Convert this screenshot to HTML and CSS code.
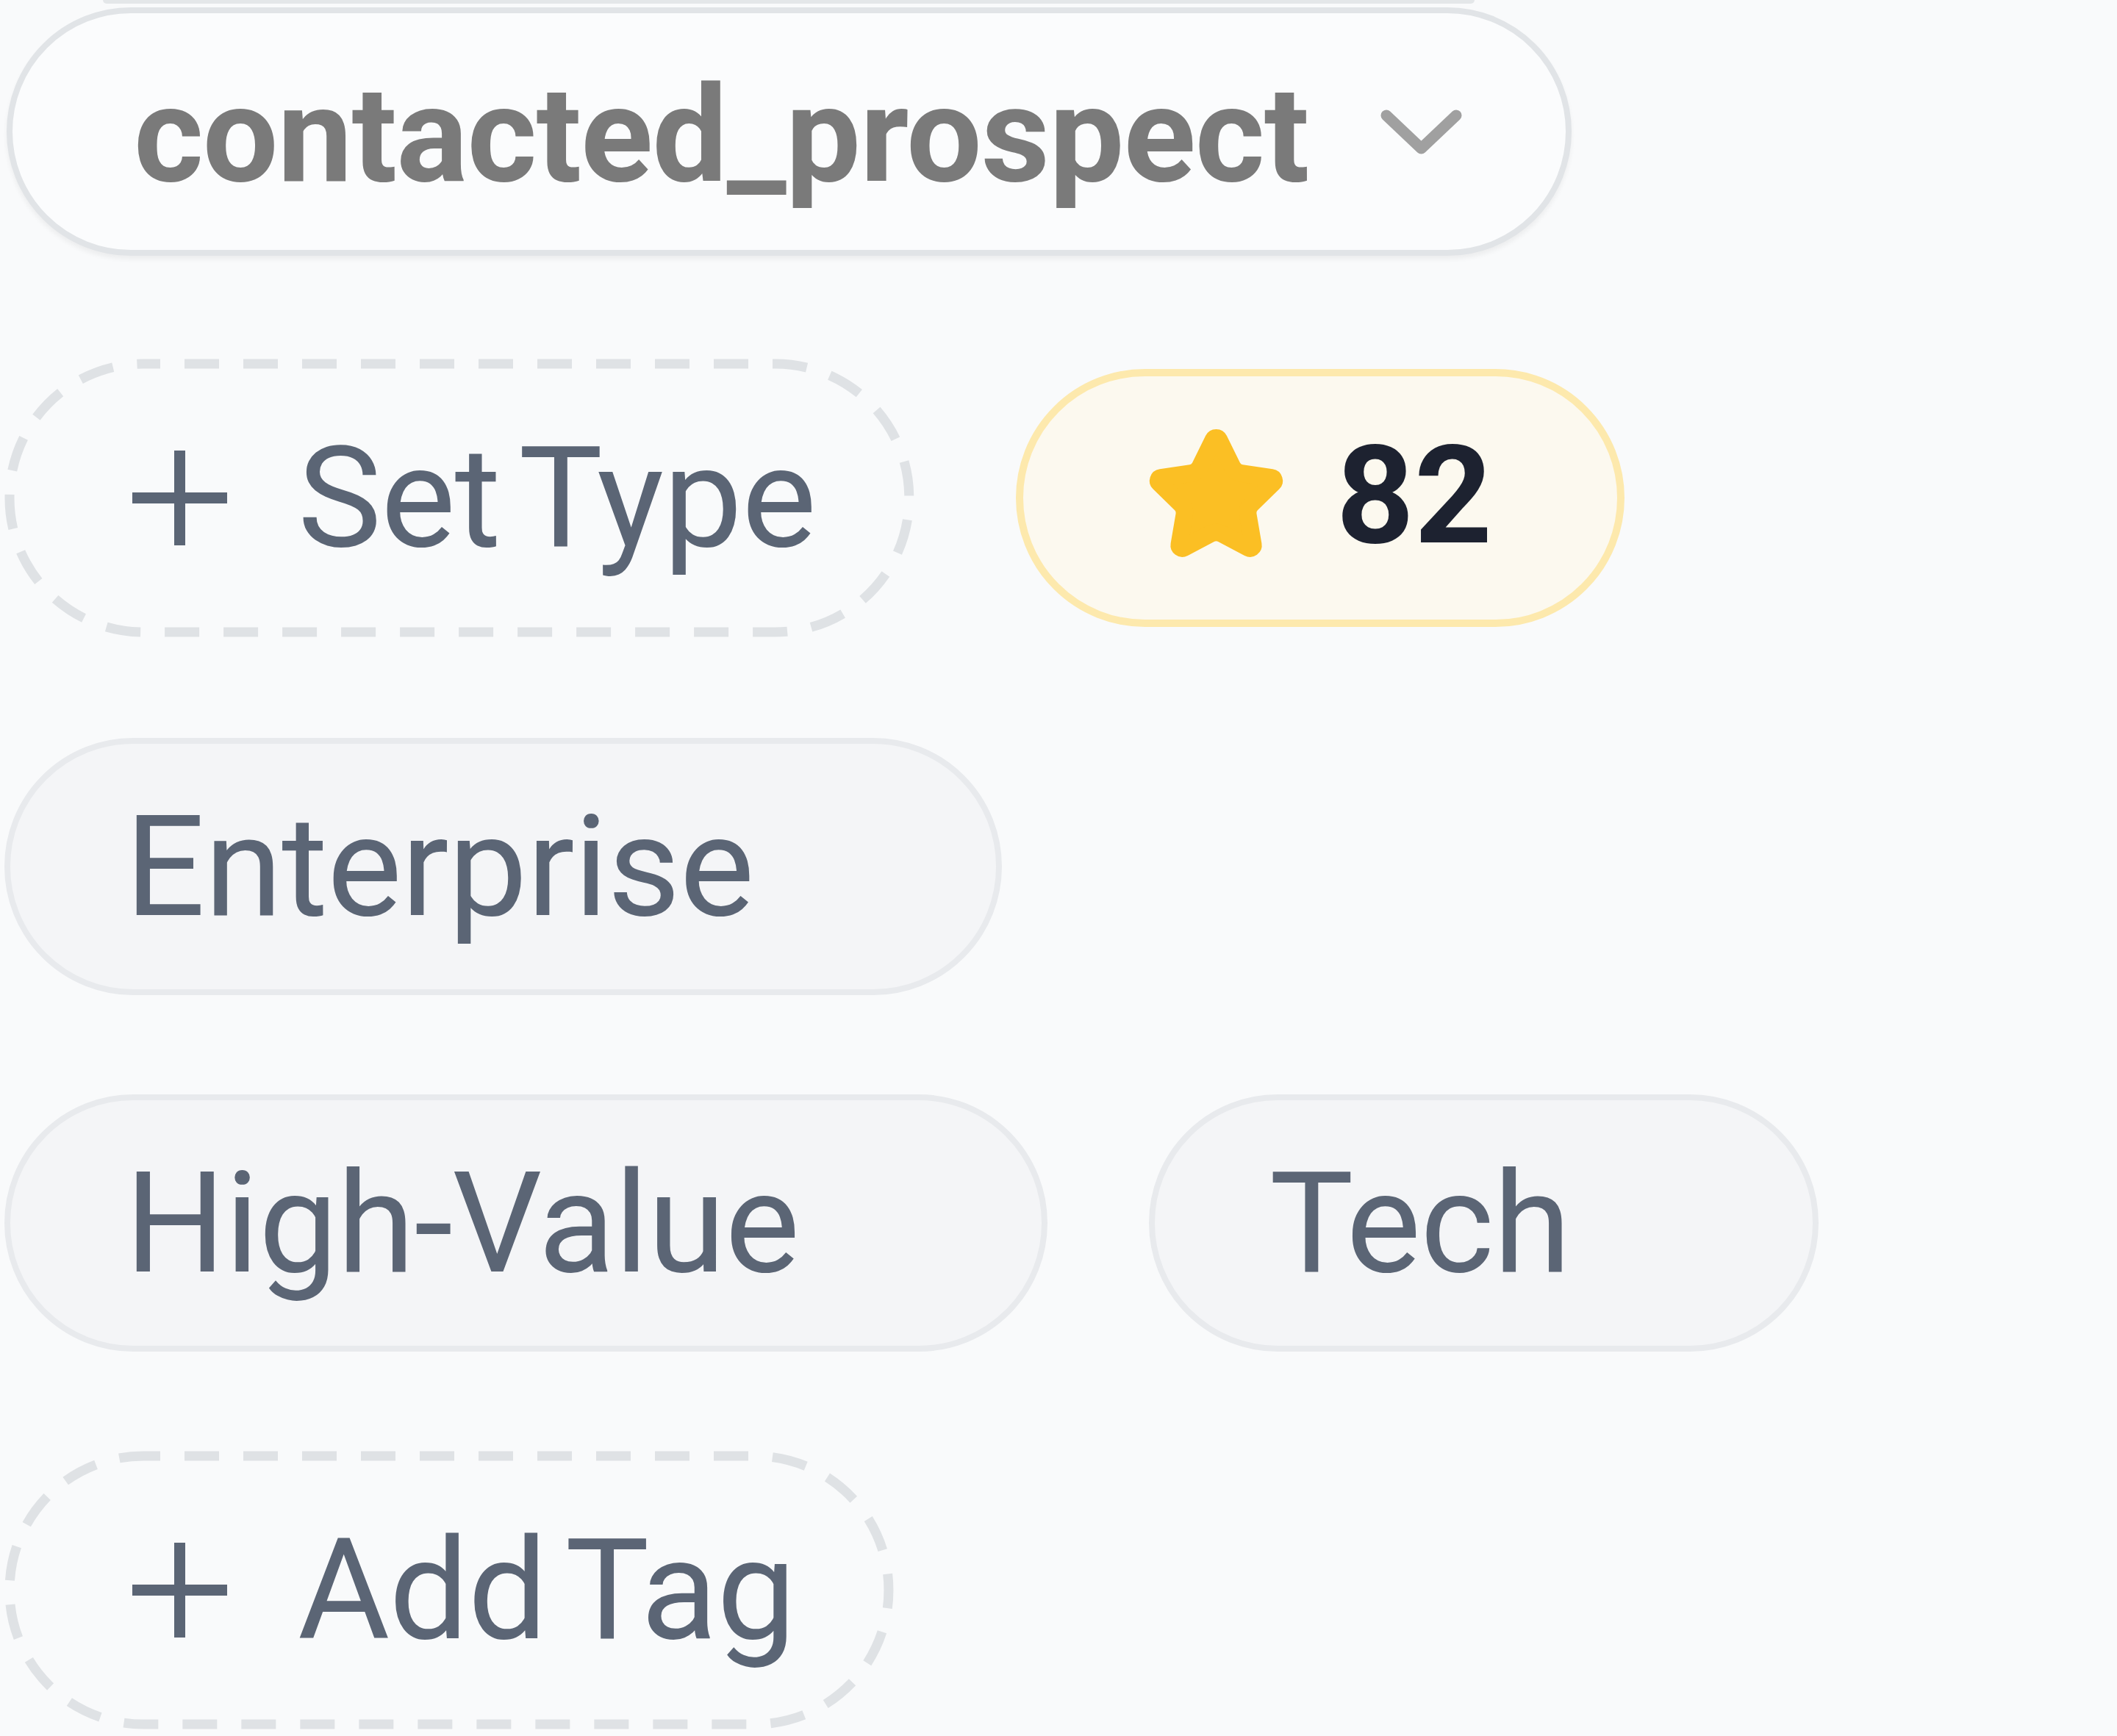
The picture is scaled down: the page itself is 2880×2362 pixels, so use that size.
FILE: index.html
```html
<!DOCTYPE html>
<html>

<head>
  <title>Lead card</title>
  <link rel="stylesheet" href="styles.css">
</head>

<body>
  <!-- bottom edge of the card above, cut off by the crop -->
  <div class="prev-edge"></div>

  <div class="lead-meta">
    <button class="status-select">
      <span class="status-label">contacted_prospect</span>
      <svg class="chevron" width="111" height="61" viewBox="0 0 111 61">
        <polyline points="8,8 55.5,53 103,8" />
      </svg>
    </button>

    <div class="pill-row">
      <button class="pill pill-dashed">
        <svg class="dash-outline" aria-hidden="true"><rect /></svg>
        <svg class="plus" width="129" height="129" viewBox="0 0 129 129">
          <path d="M64.5 0V129M0 64.5H129" />
        </svg>
        <span>Set Type</span>
      </button>
      <span class="score">
        <svg class="star" width="189" height="189" viewBox="0 0 24 24">
          <path d="M11.525 2.295a.53.53 0 0 1 .95 0l2.31 4.679a2.123 2.123 0 0 0 1.595 1.16l5.166.756a.53.53 0 0 1 .294.904l-3.736 3.638a2.123 2.123 0 0 0-.611 1.878l.882 5.14a.53.53 0 0 1-.771.56l-4.618-2.428a2.122 2.122 0 0 0-1.973 0L6.396 21.01a.53.53 0 0 1-.77-.56l.881-5.139a2.122 2.122 0 0 0-.611-1.879L2.16 9.795a.53.53 0 0 1 .294-.906l5.165-.755a2.122 2.122 0 0 0 1.597-1.16z" />
        </svg>
        <span>82</span>
      </span>
    </div>

    <div class="pill-row tag-list">
      <span class="pill tag">Enterprise</span>
      <span class="pill tag">High-Value</span>
      <span class="pill tag">Tech</span>
      <button class="pill pill-dashed">
        <svg class="dash-outline" aria-hidden="true"><rect /></svg>
        <svg class="plus" width="129" height="129" viewBox="0 0 129 129">
          <path d="M64.5 0V129M0 64.5H129" />
        </svg>
        <span>Add Tag</span>
      </button>
    </div>
  </div>
</body>

</html>
```
FILE: styles.css
```css
body {
  margin: 0;
  background-color: #f9fafb;
  font-family: Roboto, "Noto Sans", sans-serif;
  color: #5b6575;
  overflow: hidden;
}

button {
  font: inherit;
  color: inherit;
  background: none;
  border: none;
  margin: 0;
  cursor: pointer;
}

.prev-edge {
  width: 1866px;
  height: 5px;
  margin-left: 140px;
  background-color: #e4e7e9;
  border-radius: 0 0 6px 6px;
}

.lead-meta {
  display: flex;
  flex-direction: column;
  align-items: flex-start;
  gap: 140px;
  padding: 5px 0 0 6px;
}

/* status dropdown */
.status-select {
  display: inline-flex;
  align-items: center;
  gap: 98px;
  height: 338px;
  margin-left: 3px;
  padding: 8px 141px 0 165px;
  box-sizing: border-box;
  border: 8px solid #e1e4e7;
  border-radius: 999px;
  background-color: #fbfcfd;
  box-shadow: 0 5px 6px rgba(0, 0, 0, 0.05);
}

.status-label {
  font-size: 182px;
  font-weight: 700;
  letter-spacing: -1px;
  color: #7a7a7a;
}

.chevron {
  margin-top: -8px;
  fill: none;
  stroke: #a0a0a0;
  stroke-width: 15;
  stroke-linecap: round;
  stroke-linejoin: round;
}

/* pills */
.pill-row {
  display: flex;
  flex-wrap: wrap;
  align-items: center;
  column-gap: 138px;
  row-gap: 135px;
  width: 2860px;
}

.tag-list {
  margin-top: -3px;
}

.pill {
  display: inline-flex;
  align-items: center;
  box-sizing: border-box;
  border-radius: 999px;
  font-size: 192px;
  letter-spacing: -1px;
  white-space: nowrap;
}

.tag {
  height: 350px;
  padding: 0 330px 0 156px;
  border: 8px solid #e8eaed;
  background-color: #f4f5f7;
}

.pill-dashed {
  position: relative;
  height: 379px;
  gap: 96px;
  padding: 0 134px 0 174px;
  word-spacing: -18px;
}

.dash-outline {
  position: absolute;
  top: 0;
  left: 0;
  width: 100%;
  height: 100%;
  pointer-events: none;
}

.dash-outline rect {
  x: 7px;
  y: 7px;
  width: calc(100% - 14px);
  height: calc(100% - 14px);
  rx: 182px;
  ry: 182px;
  fill: none;
  stroke: #dfe2e5;
  stroke-width: 13;
  stroke-dasharray: 47 33;
  stroke-dashoffset: 24;
}

.plus {
  flex-shrink: 0;
  stroke: #5b6575;
  stroke-width: 15;
}

/* lead score */
.score {
  display: inline-flex;
  align-items: center;
  gap: 69px;
  height: 351px;
  box-sizing: border-box;
  padding: 0 170px 6px 168px;
  border: 10px solid #fde9ad;
  border-radius: 999px;
  background-color: #fcf9ef;
  font-size: 185px;
  font-weight: 700;
  color: #1d2230;
}

.star {
  fill: #fbbf24;
  stroke: #fbbf24;
  stroke-width: 3;
  stroke-linecap: round;
  stroke-linejoin: round;
}
```
